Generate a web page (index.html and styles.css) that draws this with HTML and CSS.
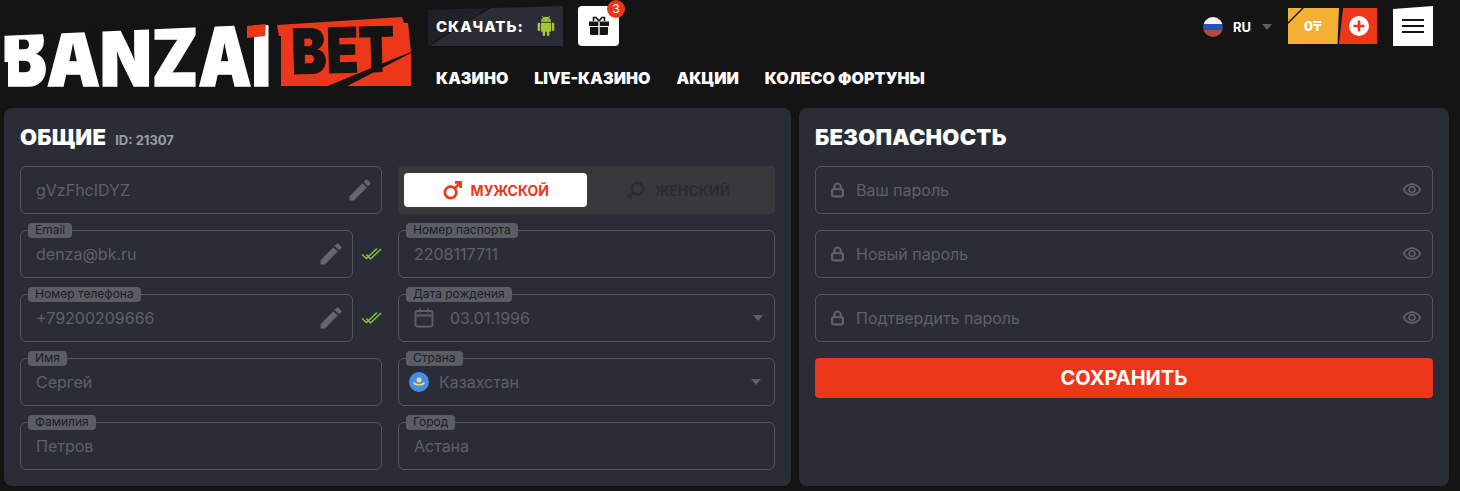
FILE: index.html
```html
<!DOCTYPE html>
<html lang="ru">
<head>
    <meta charset="UTF-8">
    <meta name="viewport" content="width=device-width, initial-scale=1.0">
    <title>Banzai Bet - Профиль</title>
    <link rel="stylesheet" href="styles.css">
</head>
<body>

    <!-- Header -->
    <header class="header">
        <svg class="logo" width="408" height="90" viewBox="4 2 408 90">
            <text x="2" y="86" class="logo-word" font-size="82" textLength="269" lengthAdjust="spacingAndGlyphs">BANZAI</text>
            <!-- slanted top and cuts of the letters -->
            <polygon points="0,18 274,18 274,24 0,36" fill="#141414"/>
            <polygon points="0,62 8,62 8,90 0,90" fill="#141414"/>
            <polygon points="44,58 52,58 46,62" fill="#141414"/>
            <polygon points="194,42 204,42 197,48" fill="#141414"/>
            <polygon points="247,26 266,24 265,36 247,38" fill="#ec371b"/>
            <polygon points="277,25 402,17 404,23 408,23 411,52 328,86 281,86 281,36 279,36" fill="#ec371b"/>
            <polygon points="411,53 411,86 347,86" fill="#ec371b"/>
            <text x="292" y="74" class="logo-bet" font-size="62" textLength="103" lengthAdjust="spacingAndGlyphs" transform="rotate(-1.5 292 74)">BET</text>
            <polygon points="328,86 411,52 347,86" fill="#141414"/>
        </svg>

        <div class="header-mid">
            <div class="header-actions">
                <a class="download-btn">
                    <span>СКАЧАТЬ:</span>
                    <svg width="20" height="20" viewBox="0 0 24 24" fill="#a4c639">
                        <path d="M6 18c0 .55.45 1 1 1h1v3.5c0 .83.67 1.5 1.5 1.5s1.5-.67 1.5-1.5V19h2v3.5c0 .83.67 1.5 1.5 1.5s1.5-.67 1.5-1.5V19h1c.55 0 1-.45 1-1V8H6v10zM3.5 8C2.67 8 2 8.67 2 9.5v7c0 .83.67 1.5 1.5 1.5S5 17.33 5 16.5v-7C5 8.67 4.33 8 3.5 8zm17 0c-.83 0-1.5.67-1.5 1.5v7c0 .83.67 1.5 1.5 1.5s1.5-.67 1.5-1.5v-7c0-.83-.67-1.5-1.5-1.5zm-4.97-5.84l1.3-1.3c.2-.2.2-.51 0-.71-.2-.2-.51-.2-.71 0l-1.48 1.48C13.85 1.23 12.95 1 12 1c-.96 0-1.86.23-2.66.63L7.85.15c-.2-.2-.51-.2-.71 0-.2.2-.2.51 0 .71l1.31 1.31C6.97 3.26 6 5.01 6 7h12c0-1.99-.97-3.75-2.47-4.84zM10 5H9V4h1v1zm5 0h-1V4h1v1z"/>
                    </svg>
                </a>
                <a class="gift-btn">
                    <svg width="20" height="20" viewBox="0 0 20 20" fill="#141414">
                        <path d="M0 5.500h9.300V10H0zM10.700 5.500H20V10h-9.300zM1 11h8.300v8H2.500A1.500 1.500 0 0 1 1 17.500zM10.700 11H19v6.500a1.500 1.500 0 0 1-1.500 1.500h-6.800z"/>
                        <path d="M10 5 7 1.500H4.500V5M10 5l3-3.500h2.500V5" stroke="#141414" stroke-width="1.600" fill="none"/>
                    </svg>
                    <span class="gift-badge">3</span>
                </a>
            </div>
            <nav class="nav">
                <a>КАЗИНО</a>
                <a>LIVE-КАЗИНО</a>
                <a>АКЦИИ</a>
                <a>КОЛЕСО ФОРТУНЫ</a>
            </nav>
        </div>

        <div class="header-right">
            <div class="lang">
                <span class="lang-flag"></span>
                <span class="lang-code">RU</span>
                <span class="caret"></span>
            </div>
            <div class="balance">
                <span class="balance-sum">0₸</span>
                <span class="balance-add">
                    <svg width="20" height="20" viewBox="0 0 20 20">
                        <circle cx="10" cy="10" r="10" fill="#fff"/>
                        <path d="M10 4.500v11M4.500 10h11" stroke="#ec371b" stroke-width="2.600"/>
                    </svg>
                </span>
            </div>
            <button class="burger"><span></span><span></span><span></span></button>
        </div>
    </header>

    <main class="main">

        <!-- General -->
        <section class="panel panel-general">
            <div class="panel-title">
                <h2>ОБЩИЕ</h2>
                <span class="panel-id">ID: 21307</span>
            </div>
            <div class="form-grid">
                <div class="field">
                    <span class="field-value">gVzFhcIDYZ</span>
                    <svg class="pencil" width="28" height="28" viewBox="0 0 24 24"><path d="M3 17.250V21h3.750L17.810 9.940l-3.750-3.750L3 17.250zM20.710 7.040c.39-.39.39-1.020 0-1.410l-2.340-2.340c-.39-.39-1.020-.39-1.410 0l-1.830 1.830 3.750 3.750 1.830-1.830z"/></svg>
                </div>

                <div class="gender">
                    <div class="gender-item active">
                        <svg width="21" height="21" viewBox="0 0 22 22" fill="none" stroke="#ec371b" stroke-width="2.800">
                            <circle cx="9" cy="13" r="6"/>
                            <path d="M13 9l6-6M13.500 2.500H19.500V8.500"/>
                        </svg>
                        МУЖСКОЙ
                    </div>
                    <div class="gender-item">
                        <svg width="21" height="21" viewBox="0 0 22 22" fill="none" stroke="#2a2d35" stroke-width="2.800">
                            <circle cx="13" cy="9" r="6"/>
                            <path d="M9 13l-6 6M3 15l4 4"/>
                        </svg>
                        ЖЕНСКИЙ
                    </div>
                </div>

                <div class="field-row">
                    <div class="field">
                        <label class="field-label">Email</label>
                        <span class="field-value">denza@bk.ru</span>
                        <svg class="pencil" width="28" height="28" viewBox="0 0 24 24"><path d="M3 17.250V21h3.750L17.810 9.940l-3.750-3.750L3 17.250zM20.710 7.040c.39-.39.39-1.020 0-1.410l-2.340-2.340c-.39-.39-1.020-.39-1.410 0l-1.830 1.830 3.750 3.750 1.830-1.830z"/></svg>
                    </div>
                    <svg class="check" width="21" height="14" viewBox="0 0 21 14" fill="none" stroke="#7dc242" stroke-width="1.500">
                        <path d="M1 7.500l4.500 4L16 1.500M5.500 7.500l4 4.500L20 2"/>
                    </svg>
                </div>

                <div class="field">
                    <label class="field-label">Номер паспорта</label>
                    <span class="field-value">2208117711</span>
                </div>

                <div class="field-row">
                    <div class="field">
                        <label class="field-label">Номер телефона</label>
                        <span class="field-value">+79200209666</span>
                        <svg class="pencil" width="28" height="28" viewBox="0 0 24 24"><path d="M3 17.250V21h3.750L17.810 9.940l-3.750-3.750L3 17.250zM20.710 7.040c.39-.39.39-1.020 0-1.410l-2.340-2.340c-.39-.39-1.020-.39-1.410 0l-1.830 1.830 3.750 3.750 1.830-1.830z"/></svg>
                    </div>
                    <svg class="check" width="21" height="14" viewBox="0 0 21 14" fill="none" stroke="#7dc242" stroke-width="1.500">
                        <path d="M1 7.500l4.500 4L16 1.500M5.500 7.500l4 4.500L20 2"/>
                    </svg>
                </div>

                <div class="field field-date">
                    <label class="field-label">Дата рождения</label>
                    <svg width="20" height="20" viewBox="0 0 20 20" fill="none" stroke="#5e6068" stroke-width="1.800">
                        <rect x="1.500" y="3" width="17" height="15.500" rx="2"/>
                        <path d="M1.500 7.500h17M6 .5v4M14 .5v4"/>
                    </svg>
                    <span class="field-value">03.01.1996</span>
                    <span class="caret caret-field"></span>
                </div>

                <div class="field">
                    <label class="field-label">Имя</label>
                    <span class="field-value">Сергей</span>
                </div>

                <div class="field field-country">
                    <label class="field-label">Страна</label>
                    <svg width="20" height="20" viewBox="0 0 20 20">
                        <circle cx="10" cy="10" r="10" fill="#4a8be8"/>
                        <circle cx="10" cy="8" r="2.500" fill="#eadb7c"/>
                        <path d="M4.500 10.500c2 3 9 3 11 0" stroke="#eadb7c" stroke-width="1.500" fill="none"/>
                    </svg>
                    <span class="field-value">Казахстан</span>
                    <span class="caret caret-field"></span>
                </div>

                <div class="field">
                    <label class="field-label">Фамилия</label>
                    <span class="field-value">Петров</span>
                </div>

                <div class="field">
                    <label class="field-label">Город</label>
                    <span class="field-value">Астана</span>
                </div>
            </div>
        </section>

        <!-- Security -->
        <section class="panel panel-security">
            <div class="panel-title">
                <h2>БЕЗОПАСНОСТЬ</h2>
            </div>
            <div class="form-stack">
                <div class="field field-password">
                    <svg width="13" height="16" viewBox="0 0 14 16" fill="none" stroke="#5e6068" stroke-width="2.400">
                        <rect x="1.200" y="7" width="11.600" height="7.800" rx="1.500"/>
                        <path d="M3.500 7V4.500a3.500 3.500 0 0 1 7 0V7"/>
                    </svg>
                    <span class="field-value">Ваш пароль</span>
                    <svg class="eye" width="20" height="20" viewBox="0 0 24 24"><path d="M12 6c3.790 0 7.170 2.130 8.820 5.500C19.170 14.870 15.790 17 12 17s-7.170-2.130-8.820-5.500C4.830 8.130 8.210 6 12 6m0-2C7 4 2.730 7.110 1 11.500 2.730 15.890 7 19 12 19s9.270-3.110 11-7.500C21.270 7.110 17 4 12 4zm0 5c1.380 0 2.500 1.120 2.500 2.500S13.380 14 12 14s-2.500-1.120-2.500-2.500S10.620 9 12 9m0-2c-2.480 0-4.500 2.020-4.500 4.500S9.520 16 12 16s4.500-2.020 4.500-4.500S14.480 7 12 7z"/></svg>
                </div>
                <div class="field field-password">
                    <svg width="13" height="16" viewBox="0 0 14 16" fill="none" stroke="#5e6068" stroke-width="2.400">
                        <rect x="1.200" y="7" width="11.600" height="7.800" rx="1.500"/>
                        <path d="M3.500 7V4.500a3.500 3.500 0 0 1 7 0V7"/>
                    </svg>
                    <span class="field-value">Новый пароль</span>
                    <svg class="eye" width="20" height="20" viewBox="0 0 24 24"><path d="M12 6c3.790 0 7.170 2.130 8.820 5.500C19.170 14.870 15.790 17 12 17s-7.170-2.130-8.820-5.500C4.830 8.130 8.210 6 12 6m0-2C7 4 2.730 7.110 1 11.500 2.730 15.890 7 19 12 19s9.270-3.110 11-7.500C21.270 7.110 17 4 12 4zm0 5c1.380 0 2.500 1.120 2.500 2.500S13.380 14 12 14s-2.500-1.120-2.500-2.500S10.620 9 12 9m0-2c-2.480 0-4.500 2.020-4.500 4.500S9.520 16 12 16s4.500-2.020 4.500-4.500S14.480 7 12 7z"/></svg>
                </div>
                <div class="field field-password">
                    <svg width="13" height="16" viewBox="0 0 14 16" fill="none" stroke="#5e6068" stroke-width="2.400">
                        <rect x="1.200" y="7" width="11.600" height="7.800" rx="1.500"/>
                        <path d="M3.500 7V4.500a3.500 3.500 0 0 1 7 0V7"/>
                    </svg>
                    <span class="field-value">Подтвердить пароль</span>
                    <svg class="eye" width="20" height="20" viewBox="0 0 24 24"><path d="M12 6c3.790 0 7.170 2.130 8.820 5.500C19.170 14.870 15.790 17 12 17s-7.170-2.130-8.820-5.500C4.830 8.130 8.210 6 12 6m0-2C7 4 2.730 7.110 1 11.500 2.730 15.890 7 19 12 19s9.270-3.110 11-7.500C21.270 7.110 17 4 12 4zm0 5c1.380 0 2.500 1.120 2.500 2.500S13.380 14 12 14s-2.500-1.120-2.500-2.500S10.620 9 12 9m0-2c-2.480 0-4.500 2.020-4.500 4.500S9.520 16 12 16s4.500-2.020 4.500-4.500S14.480 7 12 7z"/></svg>
                </div>
                <button class="save-btn">СОХРАНИТЬ</button>
            </div>
        </section>
    </main>

</body>
</html>
```

FILE: styles.css
```css
* {
    margin: 0;
    padding: 0;
    box-sizing: border-box;
}

body {
    font-family: Inter, "Noto Sans", sans-serif;
    background-color: #141414;
    color: #fff;
    height: 491px;
    overflow: hidden;
}

/* Header */
.header {
    display: flex;
    align-items: flex-start;
    height: 108px;
    padding: 0 27px 0 4px;
}

.logo {
    flex-shrink: 0;
    display: block;
    margin-top: 2px;
    overflow: visible;
}

.logo-word {
    font-family: Inter, sans-serif;
    font-weight: 900;
    fill: #fff;
    stroke: #fff;
    stroke-width: 1.5px;
}

.logo-bet {
    font-family: Inter, sans-serif;
    font-weight: 900;
    fill: #141414;
    stroke: #141414;
    stroke-width: 1px;
}

.header-mid {
    margin-left: 16px;
    padding-top: 6px;
}

.header-actions {
    display: flex;
    gap: 15px;
}

.download-btn {
    display: flex;
    align-items: center;
    gap: 12px;
    width: 135px;
    height: 40px;
    padding-left: 8px;
    background: linear-gradient(148deg, #1f2127 0 32%, #141414 32% 33%, #2a2d35 33%);
    clip-path: polygon(0 4px, 100% 0, 100% 100%, 0 100%);
    font-size: 15px;
    font-weight: 800;
    letter-spacing: 0.95px;
}

.gift-btn {
    position: relative;
    display: flex;
    align-items: center;
    justify-content: center;
    width: 41px;
    height: 40px;
    background-color: #fff;
    border-radius: 4px;
}

.gift-badge {
    position: absolute;
    top: -6px;
    right: -6px;
    width: 18px;
    height: 18px;
    border-radius: 50%;
    background-color: #ec371b;
    color: #fff;
    font-size: 12px;
    line-height: 18px;
    text-align: center;
}

.nav {
    display: flex;
    gap: 26px;
    margin-top: 21px;
    padding-left: 8px;
    font-size: 16px;
    font-weight: 900;
    line-height: 22px;
    white-space: nowrap;
}

.header-right {
    display: flex;
    align-items: flex-start;
    margin-left: auto;
    padding-top: 6px;
}

.lang {
    display: flex;
    align-items: center;
    height: 19px;
    margin-top: 11px;
    margin-right: 16px;
}

.lang-flag {
    width: 20px;
    height: 20px;
    border-radius: 50%;
    background: linear-gradient(#f4f4f4 0 36%, #2f50a8 36% 66%, #b04a3a 66%);
    margin-right: 10px;
}

.lang-code {
    font-size: 13px;
    font-weight: 700;
    margin-right: 11px;
}

.caret {
    width: 0;
    height: 0;
    border-left: 5px solid transparent;
    border-right: 5px solid transparent;
    border-top: 6px solid #5e6068;
}

.balance {
    display: flex;
    height: 36px;
    margin-top: 2px;
    margin-right: 16px;
}

.balance-sum {
    width: 51px;
    height: 36px;
    padding-left: 16px;
    background-color: #f4b033;
    clip-path: polygon(0 0, 14px 0, 0 14px, 0 16px, 16px 0, 100% 0, 97% 100%, 0 100%);
    font-size: 13px;
    font-weight: 800;
    line-height: 36px;
}

.balance-add {
    display: flex;
    align-items: center;
    justify-content: center;
    width: 38px;
    height: 36px;
    padding-left: 2px;
    background-color: #ec371b;
    clip-path: polygon(4px 0, 100% 0, 100% 100%, 0 100%);
}

.burger {
    display: flex;
    flex-direction: column;
    align-items: center;
    justify-content: center;
    gap: 4px;
    width: 40px;
    height: 40px;
    border: none;
    background-color: #fff;
    clip-path: polygon(0 3px, 100% 0, 100% 100%, 0 100%);
}

.burger span {
    width: 22px;
    height: 2px;
    background-color: #141414;
}

/* Panels */
.main {
    display: flex;
    gap: 8px;
    padding: 0 11px 0 4px;
}

.panel {
    padding: 16px;
    background-color: #2a2d35;
    border-radius: 8px;
}

.panel-general {
    width: 787px;
}

.panel-security {
    flex: 1;
}

.panel-title {
    display: flex;
    align-items: baseline;
    gap: 9px;
    height: 28px;
    margin-bottom: 14px;
}

.panel-title h2 {
    font-size: 22px;
    font-weight: 900;
    line-height: 26px;
    letter-spacing: 0.25px;
}

.panel-id {
    font-size: 13px;
    font-weight: 700;
    color: #9a9ca3;
}

.form-grid {
    display: grid;
    grid-template-columns: 362px 377px;
    grid-auto-rows: 48px;
    gap: 16px;
}

.form-stack {
    display: flex;
    flex-direction: column;
    gap: 16px;
}

/* Fields */
.field {
    position: relative;
    display: flex;
    align-items: center;
    height: 48px;
    padding: 0 16px 0 15px;
    border: 1px solid #54565e;
    border-radius: 6px;
}

.field-label {
    position: absolute;
    top: -8px;
    left: 7px;
    height: 15px;
    padding: 0 7px;
    background-color: #5a5d65;
    border-radius: 4px;
    color: #1c1e23;
    font-size: 12px;
    line-height: 14px;
}

.field-value {
    flex: 1;
    color: #5e6068;
    font-size: 16px;
    line-height: 20px;
}

.field-row {
    display: flex;
    align-items: center;
    gap: 8px;
}

.field-row .field {
    flex: 1;
}

.pencil {
    margin-right: -9px;
    fill: #64666d;
}

.check {
    flex-shrink: 0;
}

.field-date svg {
    margin-right: 16px;
}

.field-country {
    padding-left: 10px;
}

.field-country svg {
    margin-right: 10px;
}

.field-date .caret-field {
    margin-right: -5px;
}

.field-country .caret-field {
    margin-right: -3px;
}

.field-password > svg:first-child {
    margin-right: 12px;
}

.eye {
    margin-right: -6px;
    fill: #5e6068;
}

/* Gender switch */
.gender {
    display: flex;
    padding: 7px 6px;
    background-color: #38393d;
    border-radius: 4px;
}

.gender-item {
    flex: 1;
    display: flex;
    align-items: center;
    justify-content: center;
    gap: 8px;
    border-radius: 4px;
    color: #2a2d35;
    font-size: 14px;
    font-weight: 700;
}

.gender-item.active {
    background-color: #fff;
    color: #ec371b;
}

/* Save */
.save-btn {
    height: 40px;
    border: none;
    border-radius: 4px;
    background-color: #ec371b;
    color: #fff;
    font-family: Inter, sans-serif;
    font-size: 20px;
    font-weight: 700;
}
```
